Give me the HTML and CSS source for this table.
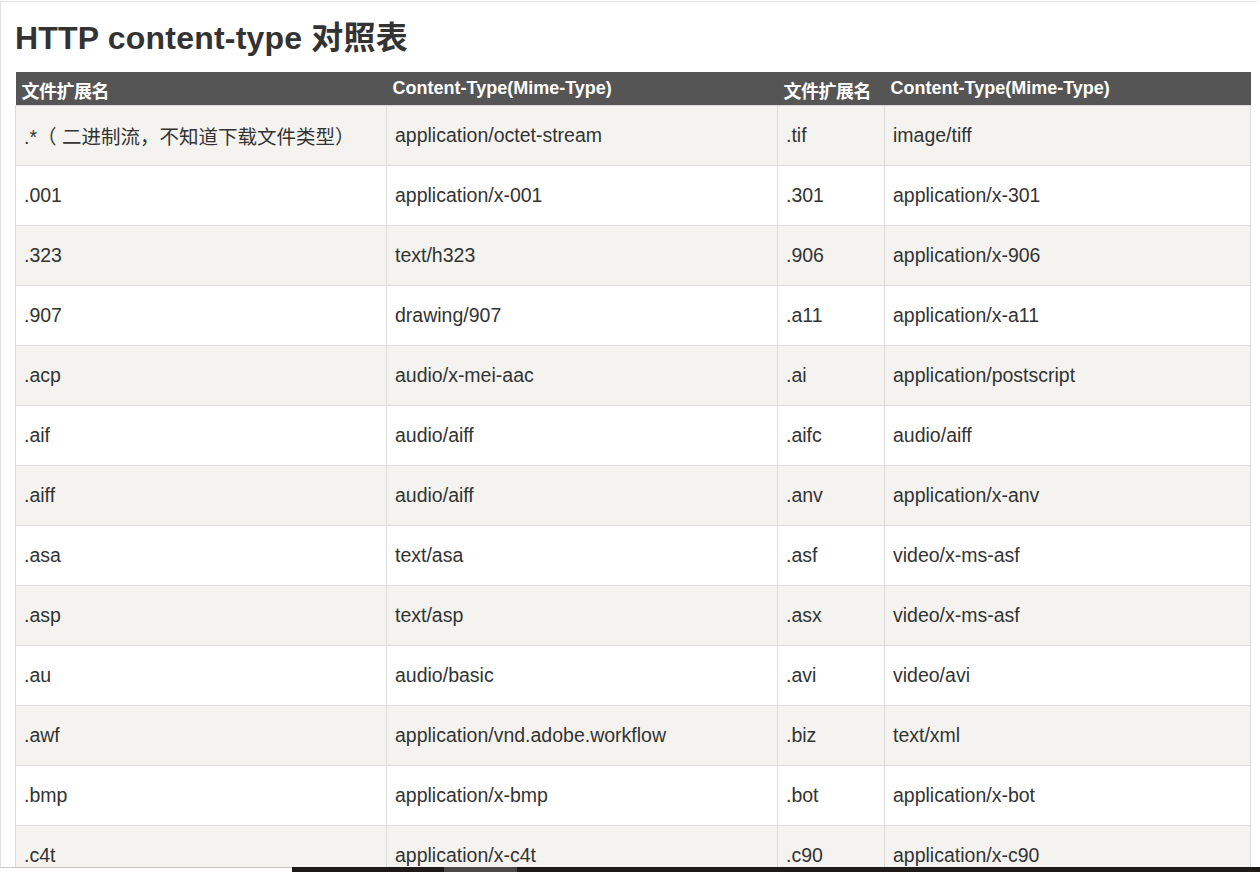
FILE: index.html
```html
<!DOCTYPE html>
<html lang="zh-CN">
<head>
<meta charset="utf-8">
<title>HTTP content-type 对照表</title>
<link rel="stylesheet" href="styles.css">
</head>
<body>
<div class="page">
  <h1 class="title">HTTP content-type 对照表</h1>
  <table class="mime">
    <colgroup>
      <col class="c-ext"><col class="c-type"><col class="c-ext2"><col class="c-type2">
    </colgroup>
    <thead>
      <tr>
        <th class="th-cjk">文件扩展名</th>
        <th>Content-Type(Mime-Type)</th>
        <th class="th-cjk">文件扩展名</th>
        <th>Content-Type(Mime-Type)</th>
      </tr>
    </thead>
    <tbody>
      <tr><td>.*（ 二进制流，不知道下载文件类型）</td><td>application/octet-stream</td><td>.tif</td><td>image/tiff</td></tr>
      <tr><td>.001</td><td>application/x-001</td><td>.301</td><td>application/x-301</td></tr>
      <tr><td>.323</td><td>text/h323</td><td>.906</td><td>application/x-906</td></tr>
      <tr><td>.907</td><td>drawing/907</td><td>.a11</td><td>application/x-a11</td></tr>
      <tr><td>.acp</td><td>audio/x-mei-aac</td><td>.ai</td><td>application/postscript</td></tr>
      <tr><td>.aif</td><td>audio/aiff</td><td>.aifc</td><td>audio/aiff</td></tr>
      <tr><td>.aiff</td><td>audio/aiff</td><td>.anv</td><td>application/x-anv</td></tr>
      <tr><td>.asa</td><td>text/asa</td><td>.asf</td><td>video/x-ms-asf</td></tr>
      <tr><td>.asp</td><td>text/asp</td><td>.asx</td><td>video/x-ms-asf</td></tr>
      <tr><td>.au</td><td>audio/basic</td><td>.avi</td><td>video/avi</td></tr>
      <tr><td>.awf</td><td>application/vnd.adobe.workflow</td><td>.biz</td><td>text/xml</td></tr>
      <tr><td>.bmp</td><td>application/x-bmp</td><td>.bot</td><td>application/x-bot</td></tr>
      <tr class="last"><td>.c4t</td><td>application/x-c4t</td><td>.c90</td><td>application/x-c90</td></tr>
    </tbody>
  </table>
</div>
<div class="taskbar">
  <div class="tb-gap"></div>
  <div class="tb-dark"></div>
  <div class="tb-light"></div>
  <div class="tb-dark tb-fill"></div>
</div>
</body>
</html>
```
FILE: styles.css
```css
html, body {
  margin: 0;
  padding: 0;
  height: 100%;
  overflow: hidden;
  background: #fff;
}

body {
  font-family: "Liberation Sans", Arial, "Noto Sans CJK SC", sans-serif;
  color: #333;
}

.page {
  margin-top: 1px;
  width: 1242px;
  border-top: 1px solid #e2e2e2;
  border-left: 1px solid #e2e2e2;
  padding: 0 0 0 14px;
  height: 866px;
  overflow: hidden;
}

.title {
  margin: 0;
  padding: 18px 0 0 0;
  height: 70px;
  box-sizing: border-box;
  font-size: 32px;
  font-weight: bold;
  line-height: 37px;
  color: #333;
  letter-spacing: 0.2px;
}

.mime {
  width: 1235px;
  table-layout: fixed;
  border-collapse: collapse;
  font-size: 19.5px;
}

.c-ext { width: 371px; }
.c-type { width: 391px; }
.c-ext2 { width: 107px; }
.c-type2 { width: 366px; }

.mime thead th {
  background: #555;
  color: #fff;
  height: 33px;
  padding: 0 6px;
  font-size: 18px;
  font-weight: bold;
  text-align: left;
  vertical-align: middle;
  box-sizing: border-box;
  line-height: 20px;
}

.mime thead th.th-cjk {
  padding-top: 4px;
  font-family: "Noto Sans CJK SC", sans-serif;
  letter-spacing: -0.5px;
}

.mime td {
  height: 60px;
  padding: 0 8px;
  border: 1px solid #dcdcdc;
  box-sizing: border-box;
  vertical-align: middle;
  white-space: nowrap;
  overflow: hidden;
  color: #333;
}

.mime tbody tr.last td {
  vertical-align: top;
  padding-top: 18px;
}

.mime tbody tr:nth-child(odd) td {
  background: #f4f3f0;
}

.mime tbody tr:nth-child(even) td {
  background: #fff;
}

.taskbar {
  position: fixed;
  left: 0;
  right: 0;
  bottom: 0;
  height: 5px;
  display: flex;
}

.tb-gap {
  width: 292px;
  border-top: 1px solid #c8c8c8;
  background: #fff;
}

.tb-dark {
  width: 152px;
  background: #1d1a17;
}

.tb-light {
  width: 73px;
  background: #4b4946;
}

.tb-fill {
  flex: 1;
}
```
